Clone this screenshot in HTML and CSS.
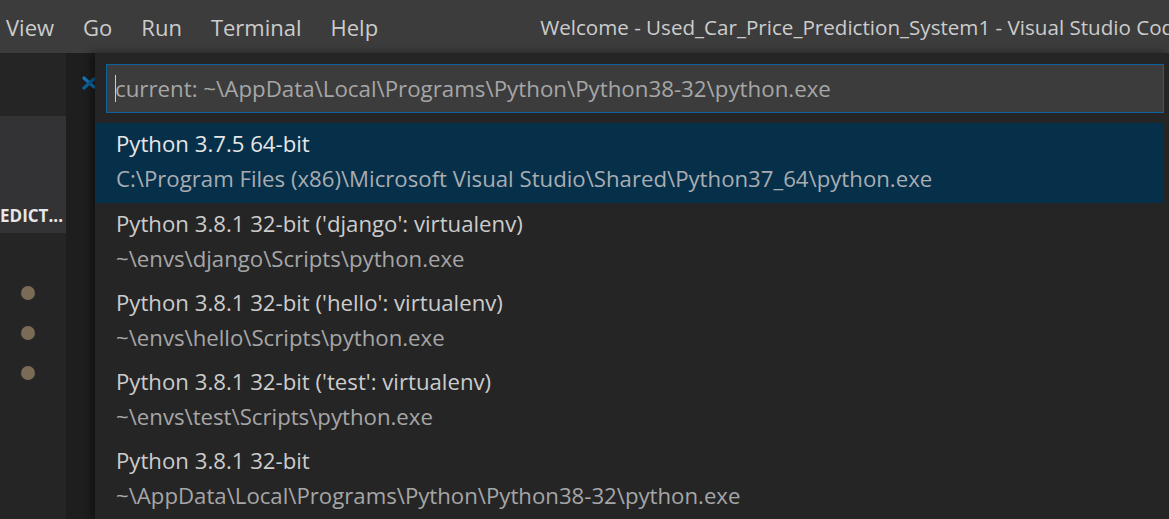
FILE: index.html
```html
<!DOCTYPE html>
<html>
<head>
<meta charset="utf-8">
<link rel="stylesheet" href="styles.css">
</head>
<body>
<div class="window">
  <header class="titlebar">
    <nav class="menu">
      <span class="menu-item">View</span>
      <span class="menu-item">Go</span>
      <span class="menu-item">Run</span>
      <span class="menu-item">Terminal</span>
      <span class="menu-item">Help</span>
    </nav>
    <div class="title">Welcome - Used_Car_Price_Prediction_System1 - Visual Studio Code</div>
  </header>
  <div class="main">
    <aside class="sidebar">
      <div class="sidebar-top"></div>
      <div class="sidebar-tab"><span class="tab-label">PREDICT...</span></div>
      <div class="dots">
        <span class="dot"></span>
        <span class="dot"></span>
        <span class="dot"></span>
      </div>
    </aside>
    <div class="gutter">
      <svg class="logo" width="14" height="16" viewBox="0 0 14 16">
        <path d="M2 3 L12 12" stroke="#1177bb" stroke-width="3.2" stroke-linecap="round"/>
        <path d="M2 13 L12 4" stroke="#0e639c" stroke-width="3.2" stroke-linecap="round"/>
      </svg>
    </div>
    <section class="quickpick">
      <div class="input"><span class="caret"></span><span class="placeholder">current: ~\AppData\Local\Programs\Python\Python38-32\python.exe</span></div>
      <ul class="list">
        <li class="item selected">
          <div class="label">Python 3.7.5 64-bit</div>
          <div class="desc">C:\Program Files (x86)\Microsoft Visual Studio\Shared\Python37_64\python.exe</div>
        </li>
        <li class="item">
          <div class="label">Python 3.8.1 32-bit ('django': virtualenv)</div>
          <div class="desc">~\envs\django\Scripts\python.exe</div>
        </li>
        <li class="item">
          <div class="label">Python 3.8.1 32-bit ('hello': virtualenv)</div>
          <div class="desc">~\envs\hello\Scripts\python.exe</div>
        </li>
        <li class="item">
          <div class="label">Python 3.8.1 32-bit ('test': virtualenv)</div>
          <div class="desc">~\envs\test\Scripts\python.exe</div>
        </li>
        <li class="item">
          <div class="label">Python 3.8.1 32-bit</div>
          <div class="desc">~\AppData\Local\Programs\Python\Python38-32\python.exe</div>
        </li>
      </ul>
    </section>
  </div>
</div>
</body>
</html>
```

FILE: styles.css
```css
html, body {
  margin: 0;
  padding: 0;
  background: #1e1e1e;
}
body {
  width: 1169px;
  height: 519px;
  overflow: hidden;
  font-family: "Open Sans", "Noto Sans", sans-serif;
}
.window {
  display: flex;
  flex-direction: column;
  height: 519px;
}
.titlebar {
  height: 53px;
  flex: none;
  background: #3c3c3c;
  display: flex;
  align-items: center;
  color: #cccccc;
  font-size: 22px;
  white-space: nowrap;
  overflow: hidden;
}
.menu {
  display: flex;
  padding-left: 6px;
}
.menu-item {
  margin-right: 29px;
}
.title {
  margin-left: 133px;
  font-size: 20.6px;
  color: #cccccc;
}
.main {
  flex: 1;
  display: flex;
  min-height: 0;
}
.sidebar {
  width: 66px;
  flex: none;
  background: #252526;
  display: flex;
  flex-direction: column;
}
.sidebar-top {
  height: 63px;
}
.sidebar-tab {
  height: 117px;
  background: #333335;
  display: flex;
  align-items: flex-end;
  justify-content: flex-end;
  overflow: hidden;
  padding-bottom: 6px;
  box-sizing: border-box;
}
.tab-label {
  color: #e7e7e7;
  font-weight: 700;
  font-size: 17px;
  white-space: nowrap;
  padding-right: 3px;
}
.dots {
  display: flex;
  flex-direction: column;
  align-items: center;
  padding-top: 53px;
  gap: 26px;
  padding-right: 10px;
}
.dot {
  width: 14px;
  height: 14px;
  border-radius: 50%;
  background: #7a6a56;
}
.gutter {
  width: 29px;
  flex: none;
  background: #1e1e1e;
  position: relative;
}
.logo {
  position: absolute;
  left: 16px;
  top: 22px;
}
.quickpick {
  flex: 1;
  background: #252526;
  box-shadow: -4px 0 8px rgba(0,0,0,0.45);
  padding: 11px 5px 0 11px;
  position: relative;
  min-width: 0;
}
.input {
  height: 49px;
  box-sizing: border-box;
  border: 1px solid #0e639c;
  background: #3c3c3c;
  display: flex;
  align-items: center;
  padding-left: 8px;
  font-size: 22.3px;
  white-space: nowrap;
  overflow: hidden;
}
.caret {
  width: 1px;
  height: 27px;
  background: #cccccc;
  margin-right: -1px;
}
.placeholder {
  color: #a6a6a6;
}
.list {
  list-style: none;
  margin: 10px 0 0 -11px;
  padding: 0;
}
.item {
  height: 79px;
  padding-left: 21px;
  box-sizing: border-box;
  padding-top: 7px;
  white-space: nowrap;
}
.item.selected {
  background: #062f4a;
  height: 80px;
}
.label {
  color: #cccccc;
  font-size: 22.2px;
  line-height: 28px;
}
.selected .label {
  color: #e6e6e6;
}
.desc {
  color: #a6a6a6;
  font-size: 22.2px;
  line-height: 28px;
  margin-top: 7px;
}
.selected .desc {
  color: #a8adb2;
}
```
